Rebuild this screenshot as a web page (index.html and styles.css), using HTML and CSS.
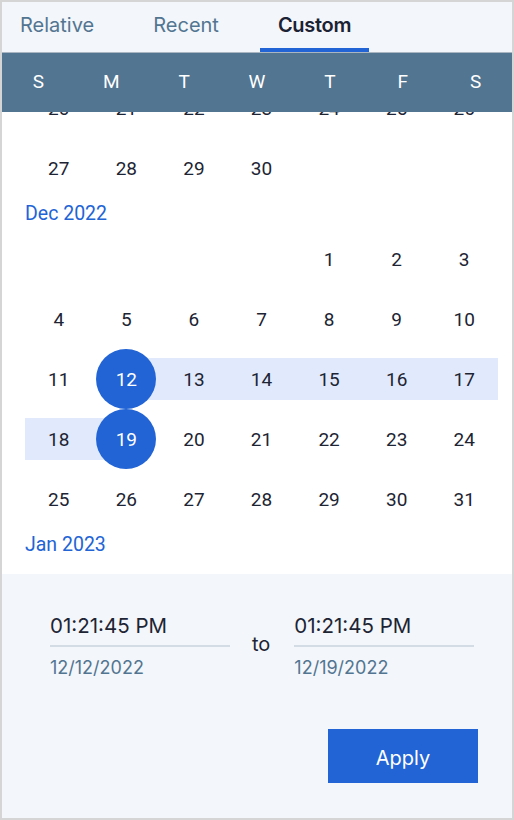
FILE: index.html
```html
<!DOCTYPE html>
<html>
<head>
<meta charset="utf-8">
<link rel="stylesheet" href="styles.css">
</head>
<body>
<div class="frame">
  <div class="tabs">
    <div class="tab">Relative</div>
    <div class="tab">Recent</div>
    <div class="tab active">Custom</div>
  </div>
  <div class="weekdays">
    <span>S</span><span>M</span><span>T</span><span>W</span><span>T</span><span>F</span><span>S</span>
  </div>
  <div class="scroll">
    <div class="months">
      <div class="week">
        <span class="day">20</span><span class="day">21</span><span class="day">22</span><span class="day">23</span><span class="day">24</span><span class="day">25</span><span class="day">26</span>
      </div>
      <div class="week">
        <span class="day">27</span><span class="day">28</span><span class="day">29</span><span class="day">30</span><span class="day"></span><span class="day"></span><span class="day"></span>
      </div>
      <div class="month-label">Dec 2022</div>
      <div class="week">
        <span class="day"></span><span class="day"></span><span class="day"></span><span class="day"></span><span class="day">1</span><span class="day">2</span><span class="day">3</span>
      </div>
      <div class="week">
        <span class="day">4</span><span class="day">5</span><span class="day">6</span><span class="day">7</span><span class="day">8</span><span class="day">9</span><span class="day">10</span>
      </div>
      <div class="week">
        <span class="day">11</span><span class="day sel start"><b>12</b></span><span class="day range">13</span><span class="day range">14</span><span class="day range">15</span><span class="day range">16</span><span class="day range">17</span>
      </div>
      <div class="week">
        <span class="day range">18</span><span class="day sel end"><b>19</b></span><span class="day">20</span><span class="day">21</span><span class="day">22</span><span class="day">23</span><span class="day">24</span>
      </div>
      <div class="week">
        <span class="day">25</span><span class="day">26</span><span class="day">27</span><span class="day">28</span><span class="day">29</span><span class="day">30</span><span class="day">31</span>
      </div>
      <div class="month-label">Jan 2023</div>
      <div class="week">
        <span class="day">1</span><span class="day">2</span><span class="day">3</span><span class="day">4</span><span class="day">5</span><span class="day">6</span><span class="day">7</span>
      </div>
    </div>
  </div>
  <div class="footer">
    <div class="range-inputs">
      <div class="field">
        <div class="time">01:21:45 PM</div>
        <div class="date">12/12/2022</div>
      </div>
      <div class="to">to</div>
      <div class="field">
        <div class="time">01:21:45 PM</div>
        <div class="date">12/19/2022</div>
      </div>
    </div>
    <div class="actions">
      <button class="apply">Apply</button>
    </div>
  </div>
</div>
</body>
</html>
```
FILE: styles.css
```css
* { box-sizing: border-box; }
html, body { margin: 0; padding: 0; background: #fff; }
.frame {
  width: 514px;
  height: 820px;
  border: 2px solid #d5d5d5;
  display: flex;
  flex-direction: column;
  overflow: hidden;
}
.tabs {
  height: 51px;
  flex: none;
  background: #f3f6fa;
  border-bottom: 1px solid #aab6c2;
  display: flex;
  gap: 23px;
}
.tab {
  padding: 0 18px;
  height: 50px;
  display: flex;
  align-items: center;
  font-family: Inter, "Liberation Sans", sans-serif;
  font-size: 20px;
  color: #527591;
  border-bottom: 4px solid transparent;
}
.tab.active {
  color: #1b2233;
  font-weight: 600;
  letter-spacing: -0.3px;
  border-bottom-color: #2264d6;
}
.weekdays {
  height: 59px;
  flex: none;
  background: #527591;
  display: grid;
  grid-template-columns: repeat(7, 1fr);
  align-items: center;
  font-family: Roboto, sans-serif;
  font-size: 19px;
  color: #fff;
  text-align: center;
  padding-bottom: 2px;
}
.scroll {
  flex: 1;
  overflow: hidden;
  background: #fff;
  padding: 0 14px 0 23px;
}
.months {
  margin-top: -34px;
  font-family: Roboto, sans-serif;
  font-size: 19px;
  color: #1d2433;
}
.week {
  display: grid;
  grid-template-columns: repeat(7, 1fr);
  height: 60px;
}
.day {
  position: relative;
  z-index: 0;
  display: flex;
  align-items: center;
  justify-content: center;
}
.day.range::before,
.day.sel::before {
  content: "";
  position: absolute;
  left: 0;
  right: 0;
  top: 9px;
  height: 42px;
  background: #e1eafc;
  z-index: -1;
}
.day.start::before { left: 50%; }
.day.end::before { right: 50%; }
.day.sel b {
  width: 60px;
  height: 60px;
  border-radius: 50%;
  background: #2264d6;
  color: #fff;
  font-weight: 400;
  display: flex;
  align-items: center;
  justify-content: center;
}
.month-label {
  height: 31px;
  display: flex;
  align-items: center;
  color: #2264d6;
  font-size: 19.5px;
}
.footer {
  height: 244px;
  flex: none;
  background: #f3f6fa;
  padding: 39px 34px 0 48px;
  font-family: Inter, "Liberation Sans", sans-serif;
}
.range-inputs {
  display: flex;
  align-items: center;
  gap: 22px;
}
.field {
  width: 180px;
}
.to {
  font-size: 20px;
  color: #1d2433;
  margin-top: -4px;
  margin-right: 2px;
}
.time {
  font-size: 20.5px;
  line-height: 25px;
  color: #1d2433;
  padding-bottom: 7px;
  border-bottom: 2px solid #d3dce5;
}
.date {
  margin-top: 10px;
  font-size: 18px;
  line-height: 22px;
  color: #527591;
}
.actions {
  display: flex;
  justify-content: flex-end;
  margin-top: 50px;
}
.apply {
  width: 150px;
  height: 54px;
  border: none;
  padding: 3px 0 0;
  background: #2264d6;
  color: #fff;
  font-family: Inter, "Liberation Sans", sans-serif;
  font-size: 20px;
  cursor: pointer;
}
```
